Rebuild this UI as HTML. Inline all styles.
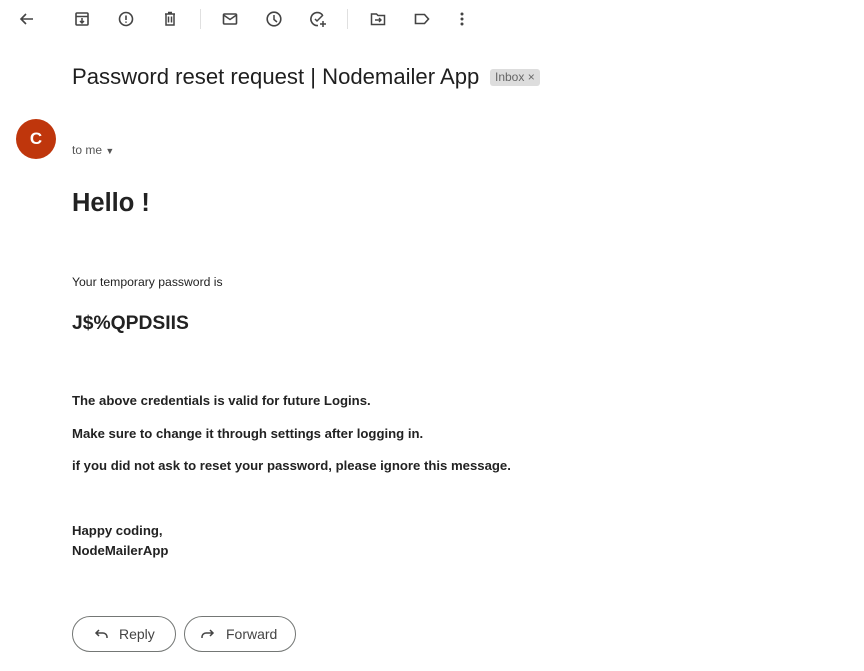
<!DOCTYPE html>
<html><head><meta charset="utf-8"><style>
*{margin:0;padding:0;box-sizing:border-box}
body{width:864px;height:671px;background:#fff;font-family:"Liberation Sans",Arial,sans-serif;color:#222;position:relative;overflow:hidden}
.ic{position:absolute;top:9px}
svg{display:block}
.sep{position:absolute;top:9px;width:1px;height:20px;background:#e0e0e0}
.abs{position:absolute;white-space:nowrap}
.btn{position:absolute;top:616px;height:36px;border:1px solid #747775;border-radius:18px;font-size:14px;color:#444;display:flex;align-items:center}
</style></head><body>
<svg class="ic" style="left:17px" width="20" height="20" viewBox="0 0 20 20"><path d="M16 10H4M9 5l-5 5 5 5" stroke="#444" stroke-width="1.6" fill="none"/></svg>
<svg class="ic" style="left:72px" width="20" height="20" viewBox="0 0 20 20"><rect x="4" y="4" width="12" height="12" rx="1" stroke="#444" stroke-width="1.6" fill="none"/><path d="M4 7.5h12M10 9v5M8 12l2 2 2-2" stroke="#444" stroke-width="1.5" fill="none"/></svg>
<svg class="ic" style="left:116px" width="20" height="20" viewBox="0 0 20 20"><circle cx="10" cy="10" r="6.5" stroke="#444" stroke-width="1.6" fill="none"/><path d="M10 6.5v4.5M10 12.5v1.3" stroke="#444" stroke-width="1.6"/></svg>
<svg class="ic" style="left:160px" width="20" height="20" viewBox="0 0 20 20"><path d="M5 5h10M8 3.5h4M6 5v11h8V5M8.5 7.5v6M11.5 7.5v6" stroke="#444" stroke-width="1.5" fill="none"/></svg>
<div class="sep" style="left:200px"></div>
<svg class="ic" style="left:220px" width="20" height="20" viewBox="0 0 20 20"><rect x="3.5" y="5" width="13" height="10" rx="1" stroke="#444" stroke-width="1.6" fill="none"/><path d="M3.5 6l6.5 4.5 6.5-4.5" stroke="#444" stroke-width="1.5" fill="none"/></svg>
<svg class="ic" style="left:264px" width="20" height="20" viewBox="0 0 20 20"><circle cx="10" cy="10" r="6.8" stroke="#444" stroke-width="1.6" fill="none"/><path d="M10 6v4.5l3 2.5" stroke="#444" stroke-width="1.5" fill="none"/></svg>
<svg class="ic" style="left:308px" width="20" height="20" viewBox="0 0 20 20"><path d="M14.5 6A6.5 6.5 0 1 0 10 16.5" stroke="#444" stroke-width="1.6" fill="none"/><path d="M7 10l2 2 6-6M15 12v6M12 15h6" stroke="#444" stroke-width="1.5" fill="none"/></svg>
<div class="sep" style="left:347px"></div>
<svg class="ic" style="left:368px" width="20" height="20" viewBox="0 0 20 20"><path d="M3.5 5h5l1.5 1.5h6.5v9h-13z" stroke="#444" stroke-width="1.5" fill="none"/><path d="M7 11h6M11 9l2 2-2 2" stroke="#444" stroke-width="1.4" fill="none"/></svg>
<svg class="ic" style="left:412px" width="20" height="20" viewBox="0 0 20 20"><path d="M3.5 5.5h9l4 4.5-4 4.5h-9z" stroke="#444" stroke-width="1.6" fill="none"/></svg>
<svg class="ic" style="left:452px" width="20" height="20" viewBox="0 0 20 20"><circle cx="10" cy="5" r="1.5" fill="#444"/><circle cx="10" cy="10" r="1.5" fill="#444"/><circle cx="10" cy="15" r="1.5" fill="#444"/></svg>

<div class="abs" style="left:72px;top:64px;font-size:22.1px;color:#1f1f1f">Password reset request | Nodemailer App</div>
<div class="abs" style="left:490px;top:69px;height:17px;padding:0 5px;background:#ddd;border-radius:3px;font-size:12px;color:#666;line-height:17px">Inbox ×</div>

<div class="abs" style="left:16px;top:119px;width:40px;height:40px;border-radius:50%;background:#bf360c;color:#fff;font-size:17px;font-weight:bold;text-align:center;line-height:40px">C</div>
<div class="abs" style="left:72px;top:143px;font-size:12px;color:#555">to me <span style="font-size:9px">▼</span></div>

<div class="abs" style="left:72px;top:189px;font-size:25.5px;font-weight:bold">Hello !</div>
<div class="abs" style="left:72px;top:275px;font-size:12.2px">Your temporary password is</div>
<div class="abs" style="left:72px;top:313px;font-size:19.3px;font-weight:bold">J$%QPDSIIS</div>
<div class="abs" style="left:72px;top:393px;font-size:13.15px;font-weight:bold">The above credentials is valid for future Logins.</div>
<div class="abs" style="left:72px;top:426px;font-size:13.15px;font-weight:bold">Make sure to change it through settings after logging in.</div>
<div class="abs" style="left:72px;top:458px;font-size:13.15px;font-weight:bold">if you did not ask to reset your password, please ignore this message.</div>
<div class="abs" style="left:72px;top:521px;font-size:13.15px;font-weight:bold;line-height:20px">Happy coding,<br>NodeMailerApp</div>

<div class="btn" style="left:72px;width:104px"><svg style="margin-left:19px" width="18" height="18" viewBox="0 0 18 18"><path d="M4 8h7a4 4 0 0 1 4 4v1M7 5L4 8l3 3" stroke="#444" stroke-width="1.5" fill="none"/></svg><span style="margin-left:9px">Reply</span></div>
<div class="btn" style="left:184px;width:112px"><svg style="margin-left:14px" width="18" height="18" viewBox="0 0 18 18"><path d="M14 8H7a4 4 0 0 0-4 4v1M11 5l3 3-3 3" stroke="#444" stroke-width="1.5" fill="none"/></svg><span style="margin-left:9px">Forward</span></div>
</body></html>
